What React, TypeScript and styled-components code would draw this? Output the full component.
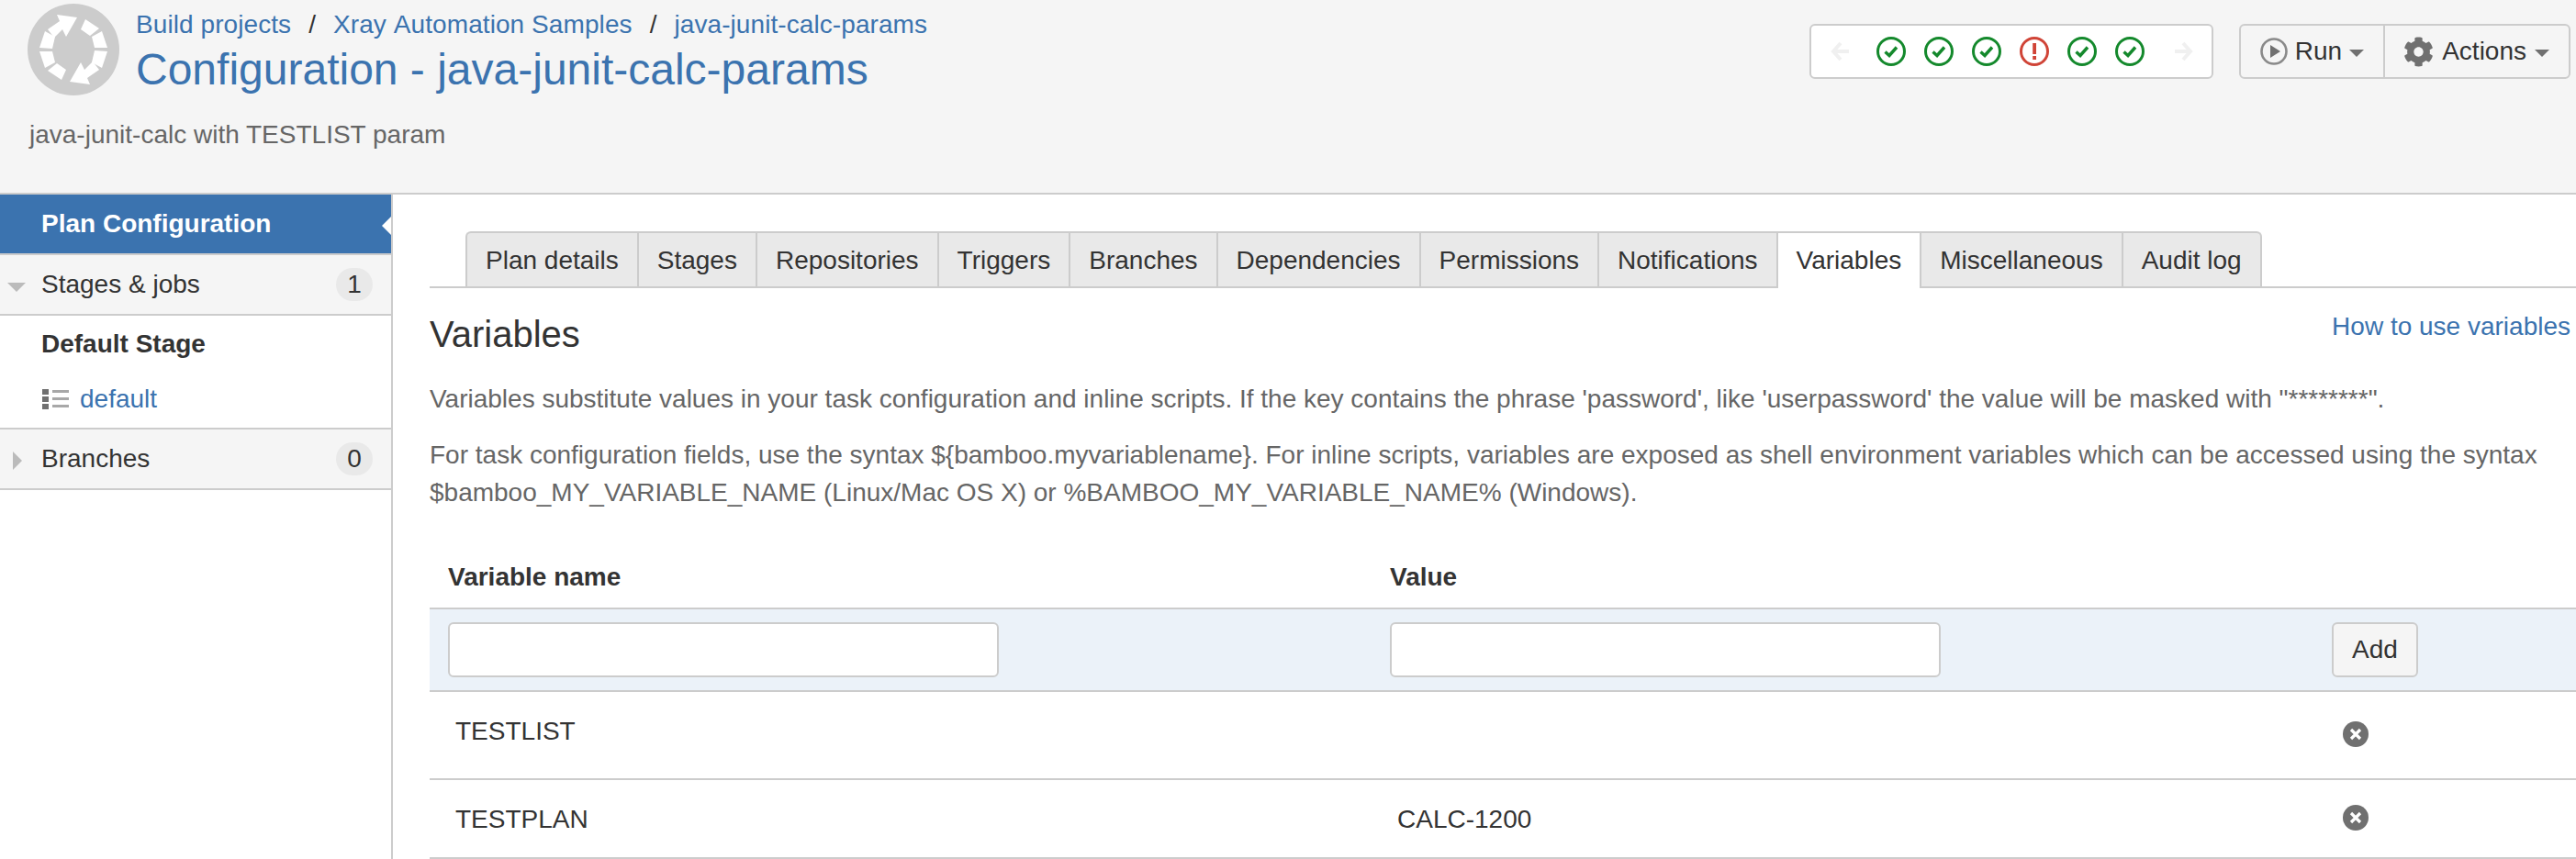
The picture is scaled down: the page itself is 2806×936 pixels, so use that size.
import React from 'react'
import styled, { createGlobalStyle } from 'styled-components'
import { FaCog } from 'react-icons/fa'

const GlobalStyle = createGlobalStyle`
  html, body {
    margin: 0;
    padding: 0;
    height: 936px;
    overflow: hidden;
    background: #fff;
    color: #333;
    font-family: "Liberation Sans", Arial, sans-serif;
    font-size: 28px;
    line-height: 40px;
  }
  * {
    box-sizing: border-box;
  }
`

const tabs = ['Plan details', 'Stages', 'Repositories', 'Triggers', 'Branches', 'Dependencies', 'Permissions', 'Notifications', 'Variables', 'Miscellaneous', 'Audit log']
const builds = ['ok', 'ok', 'ok', 'fail', 'ok', 'ok']

const Logo = () => (
  <S.Logo viewBox='0 0 100 100'>
    <circle cx='50' cy='50' r='50' fill='#ccc' />
    <g fill='#fff'>
      <path d='M54 15 L32 12 L35 19 L22 28 L29 37 L38 28 L42 36 Z' />
      <path d='M46 85 L68 88 L65 81 L78 72 L71 63 L62 72 L58 64 Z' />
      <path d='M63 17 L78 27 L68 35 L58 28 Z' />
      <path d='M70 36 L81 30 L87 48 L73 48 Z' />
      <path d='M73 51 L87 52 L81 70 L70 64 Z' />
      <path d='M37 83 L22 73 L32 65 L42 72 Z' />
      <path d='M30 64 L19 70 L13 52 L27 52 Z' />
      <path d='M27 49 L13 48 L19 30 L30 36 Z' />
    </g>
  </S.Logo>
)

const Arrow = ({ flip }: { flip?: boolean }) => (
  <S.Arrow viewBox='0 0 24 24' $flip={flip}>
    <path d='M21 12 H5 M12 3 L4 12 L12 21' fill='none' stroke='#f0f0f0' strokeWidth='4' />
  </S.Arrow>
)

const BuildStatus = ({ state }: { state: string }) => (
  <svg width='32' height='32' viewBox='0 0 32 32'>
    {state === 'ok' ? (
      <>
        <circle cx='16' cy='16' r='14.5' fill='#fff' stroke='#14892c' strokeWidth='3' />
        <path d='M9.5 16.5 L14 20.5 L22 11.5' fill='none' stroke='#14892c' strokeWidth='3.4' />
      </>
    ) : (
      <>
        <circle cx='16' cy='16' r='14.5' fill='#fff' stroke='#d04437' strokeWidth='3' />
        <rect x='14.2' y='7' width='3.8' height='12' fill='#d04437' />
        <rect x='14.2' y='21' width='3.8' height='4' fill='#d04437' />
      </>
    )}
  </svg>
)

const PlayIcon = () => (
  <svg width='30' height='30' viewBox='0 0 30 30'>
    <circle cx='15' cy='15' r='13.5' fill='#f5f5f5' stroke='#8a8a8a' strokeWidth='2.6' />
    <path d='M11 8 L22 15 L11 22 Z' fill='#707070' />
  </svg>
)

const ListIcon = () => (
  <svg width='30' height='22' viewBox='0 0 30 22'>
    <g fill='#707070'>
      <rect x='0' y='0' width='7' height='6' />
      <rect x='0' y='8' width='7' height='6' />
      <rect x='0' y='16' width='7' height='6' />
    </g>
    <g fill='#a8a8a8'>
      <rect x='11' y='1' width='18' height='3' />
      <rect x='11' y='9' width='18' height='3' />
      <rect x='11' y='17' width='18' height='3' />
    </g>
  </svg>
)

const RemoveIcon = () => (
  <S.Remove viewBox='0 0 28 28'>
    <circle cx='14' cy='14' r='14' fill='#707070' />
    <path d='M9 9 L19 19 M19 9 L9 19' stroke='#fff' strokeWidth='3.2' />
  </S.Remove>
)

const App = () => {
  return (<S.App>
    <GlobalStyle />
    <S.Header>
      <S.HeaderTop>
        <S.HeaderMain>
          <Logo />
          <div>
            <S.Breadcrumbs>
              <S.Link>Build projects</S.Link>
              <S.Slash>/</S.Slash>
              <S.Link>Xray Automation Samples</S.Link>
              <S.Slash>/</S.Slash>
              <S.Link>java-junit-calc-params</S.Link>
            </S.Breadcrumbs>
            <S.Title>Configuration - java-junit-calc-params</S.Title>
          </div>
        </S.HeaderMain>
        <S.Controls>
          <S.History>
            <Arrow />
            <S.Builds>
              {builds.map((state, i) => <BuildStatus key={i} state={state} />)}
            </S.Builds>
            <Arrow flip />
          </S.History>
          <S.ButtonGroup>
            <S.ToolButton $padLeft={21} $gap={8}>
              <PlayIcon />
              <span>Run</span>
              <S.Caret />
            </S.ToolButton>
            <S.ToolButton $padLeft={20} $gap={9} $divider>
              <FaCog size={33} color='#707070' />
              <span>Actions</span>
              <S.Caret />
            </S.ToolButton>
          </S.ButtonGroup>
        </S.Controls>
      </S.HeaderTop>
      <S.Description>java-junit-calc with TESTLIST param</S.Description>
    </S.Header>

    <S.Body>
      <S.Sidebar>
        <S.ActiveItem>Plan Configuration</S.ActiveItem>
        <S.Group>
          <S.TriangleDown />
          <span>Stages &amp; jobs</span>
          <S.Badge>1</S.Badge>
        </S.Group>
        <S.Stage>
          <S.StageName>Default Stage</S.StageName>
          <S.Job>
            <ListIcon />
            <S.Link>default</S.Link>
          </S.Job>
        </S.Stage>
        <S.Group>
          <S.TriangleRight />
          <span>Branches</span>
          <S.Badge>0</S.Badge>
        </S.Group>
      </S.Sidebar>

      <S.Content>
        <S.Tabs>
          {tabs.map((tab, i) => (
            <S.Tab key={tab} $active={tab === 'Variables'} $first={i === 0} $last={i === tabs.length - 1}>{tab}</S.Tab>
          ))}
        </S.Tabs>
        <S.HeadingRow>
          <S.Heading>Variables</S.Heading>
          <S.HelpLink>How to use variables</S.HelpLink>
        </S.HeadingRow>
        <S.Text>Variables substitute values in your task configuration and inline scripts. If the key contains the phrase 'password', like 'userpassword' the value will be masked with "********".</S.Text>
        <S.Text>For task configuration fields, use the syntax {'${bamboo.myvariablename}'}. For inline scripts, variables are exposed as shell environment variables which can be accessed using the syntax<br />$bamboo_MY_VARIABLE_NAME (Linux/Mac OS X) or %BAMBOO_MY_VARIABLE_NAME% (Windows).</S.Text>

        <S.HeadRow>
          <S.HeadCell>Variable name</S.HeadCell>
          <S.HeadCell>Value</S.HeadCell>
        </S.HeadRow>
        <S.AddRow>
          <S.FieldCell><S.Input /></S.FieldCell>
          <S.FieldCell><S.Input /></S.FieldCell>
          <S.FieldCell><S.AddButton>Add</S.AddButton></S.FieldCell>
        </S.AddRow>
        <S.Row $height={96}>
          <S.Cell>TESTLIST</S.Cell>
          <S.Cell />
          <RemoveIcon />
        </S.Row>
        <S.Row $height={86}>
          <S.Cell>TESTPLAN</S.Cell>
          <S.Cell>CALC-1200</S.Cell>
          <RemoveIcon />
        </S.Row>
      </S.Content>
    </S.Body>
  </S.App>)
}

export default App

const columns = '1026px 1026px 1fr'

const S = {
  App: styled.div`
    width: 2806px;
    height: 936px;
    display: flex;
    flex-direction: column;
  `,
  Header: styled.div`
    height: 212px;
    flex-shrink: 0;
    padding: 4px 6px 0 30px;
    background: #f5f5f5;
    border-bottom: 2px solid #ccc;
  `,
  HeaderTop: styled.div`
    display: flex;
    justify-content: space-between;
    align-items: flex-start;
  `,
  HeaderMain: styled.div`
    display: flex;
    gap: 18px;
  `,
  Logo: styled.svg`
    width: 100px;
    height: 100px;
    flex-shrink: 0;
  `,
  Breadcrumbs: styled.div`
    display: flex;
    margin-top: 3px;
    font-kerning: none;
    letter-spacing: .08px;
  `,
  Link: styled.a`
    color: #3b73af;
  `,
  Slash: styled.span`
    margin: 0 19px;
  `,
  Title: styled.h1`
    margin: 0;
    color: #3b73af;
    font-size: 48px;
    font-weight: normal;
    line-height: 58px;
  `,
  Controls: styled.div`
    display: flex;
    gap: 28px;
    margin-top: 22px;
  `,
  History: styled.div`
    display: flex;
    align-items: center;
    height: 60px;
    padding: 0 19px 0 20px;
    background: #fff;
    border: 2px solid #ccc;
    border-radius: 6px;
  `,
  Arrow: styled.svg<{ $flip?: boolean }>`
    width: 24px;
    height: 24px;
    transform: ${props => props.$flip ? 'scaleX(-1)' : 'none'};
  `,
  Builds: styled.div`
    display: flex;
    gap: 20px;
    margin: 0 30px 0 27px;
  `,
  ButtonGroup: styled.div`
    display: flex;
    height: 60px;
    background: #f5f5f5;
    border: 2px solid #ccc;
    border-radius: 6px;
  `,
  ToolButton: styled.div<{ $padLeft: number, $gap: number, $divider?: boolean }>`
    display: flex;
    align-items: center;
    gap: ${props => props.$gap}px;
    padding: 0 21px 0 ${props => props.$padLeft}px;
    border-left: ${props => props.$divider ? '2px solid #ccc' : 'none'};
  `,
  Caret: styled.span`
    width: 0;
    height: 0;
    margin-top: 4px;
    border-left: 8px solid transparent;
    border-right: 8px solid transparent;
    border-top: 8px solid #707070;
  `,
  Description: styled.div`
    margin: 22px 0 0 2px;
    color: #666;
  `,
  Body: styled.div`
    flex: 1;
    display: flex;
    min-height: 0;
  `,
  Sidebar: styled.div`
    width: 428px;
    flex-shrink: 0;
    border-right: 2px solid #ccc;
  `,
  ActiveItem: styled.div`
    position: relative;
    height: 66px;
    padding: 12px 0 0 45px;
    background: #3b73af;
    border-bottom: 2px solid #ccc;
    color: #fff;
    font-weight: bold;
    &::after {
      content: '';
      position: absolute;
      right: 0;
      top: 24px;
      border-top: 10px solid transparent;
      border-bottom: 10px solid transparent;
      border-right: 10px solid #fff;
    }
  `,
  Group: styled.div`
    position: relative;
    display: flex;
    align-items: center;
    justify-content: space-between;
    height: 66px;
    padding: 0 20px 0 45px;
    background: #f5f5f5;
    border-bottom: 2px solid #ccc;
  `,
  TriangleDown: styled.span`
    position: absolute;
    left: 8px;
    top: 30px;
    border-left: 10px solid transparent;
    border-right: 10px solid transparent;
    border-top: 10px solid #bbb;
  `,
  TriangleRight: styled.span`
    position: absolute;
    left: 14px;
    top: 24px;
    border-top: 10px solid transparent;
    border-bottom: 10px solid transparent;
    border-left: 10px solid #bbb;
  `,
  Badge: styled.span`
    width: 40px;
    height: 36px;
    border-radius: 18px;
    background: #e9e9e9;
    line-height: 36px;
    text-align: center;
  `,
  Stage: styled.div`
    height: 124px;
    border-bottom: 2px solid #ccc;
  `,
  StageName: styled.div`
    height: 60px;
    padding: 11px 0 0 45px;
    font-weight: bold;
  `,
  Job: styled.div`
    display: flex;
    align-items: center;
    gap: 11px;
    height: 62px;
    padding-left: 46px;
  `,
  Content: styled.div`
    flex: 1;
    min-width: 0;
    padding: 40px 0 0 40px;
  `,
  Tabs: styled.div`
    display: flex;
    height: 62px;
    padding-left: 39px;
    border-bottom: 2px solid #ccc;
  `,
  Tab: styled.div<{ $active?: boolean, $first?: boolean, $last?: boolean }>`
    height: ${props => props.$active ? '62px' : '60px'};
    padding: 10px 20px 0;
    background: ${props => props.$active ? '#fff' : '#e9e9e9'};
    border-top: 2px solid #ccc;
    border-left: 2px solid #ccc;
    border-right: ${props => props.$last ? '2px solid #ccc' : 'none'};
    border-radius: ${props => props.$first ? '6px 0 0 0' : props.$last ? '0 6px 0 0' : '0'};
  `,
  HeadingRow: styled.div`
    display: flex;
    justify-content: space-between;
    align-items: flex-start;
    margin-top: 22px;
    padding-right: 6px;
  `,
  Heading: styled.h2`
    margin: 0;
    font-size: 40px;
    font-weight: normal;
    line-height: 56px;
  `,
  HelpLink: styled.a`
    color: #3b73af;
  `,
  Text: styled.p`
    margin: 20px 0 0;
    color: #666;
    line-height: 41px;
    &:first-of-type {
      margin-top: 22px;
    }
  `,
  HeadRow: styled.div`
    display: grid;
    grid-template-columns: ${columns};
    align-items: center;
    height: 72px;
    margin-top: 35px;
    border-bottom: 2px solid #ccc;
  `,
  HeadCell: styled.div`
    padding: 4px 0 0 20px;
    font-weight: bold;
  `,
  AddRow: styled.div`
    display: grid;
    grid-template-columns: ${columns};
    height: 90px;
    padding-top: 14px;
    background: #ebf2f9;
    border-bottom: 2px solid #ccc;
  `,
  FieldCell: styled.div`
    padding-left: 20px;
  `,
  Input: styled.input`
    display: block;
    width: 600px;
    height: 60px;
    background: #fff;
    border: 2px solid #ccc;
    border-radius: 6px;
  `,
  AddButton: styled.button`
    display: block;
    width: 94px;
    height: 60px;
    padding: 0;
    background: #f5f5f5;
    border: 2px solid #ccc;
    border-radius: 6px;
    color: #333;
    font: inherit;
  `,
  Row: styled.div<{ $height: number }>`
    display: grid;
    grid-template-columns: ${columns};
    height: ${props => props.$height}px;
    border-bottom: 2px solid #ccc;
  `,
  Cell: styled.div`
    padding: 23px 0 0 28px;
  `,
  Remove: styled.svg`
    align-self: center;
    width: 28px;
    height: 28px;
    margin-left: 32px;
    margin-bottom: 2px;
  `
}
